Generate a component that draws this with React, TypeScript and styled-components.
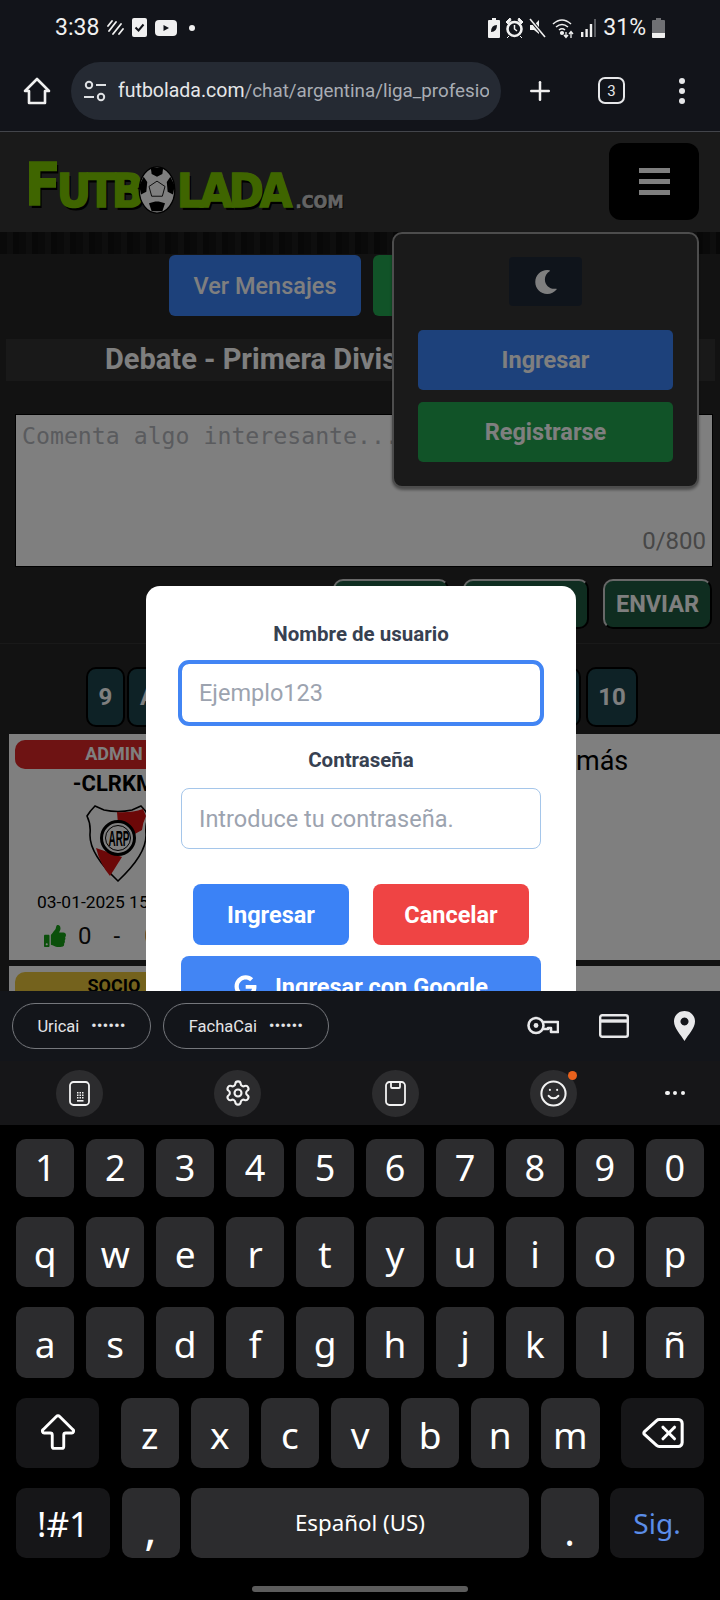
import React from 'react';
import styled, { createGlobalStyle } from 'styled-components';
import { ArrowBigUp, Delete, Plus, Settings, Smile } from 'lucide-react';
import { FaGoogle, FaMoon, FaThumbsUp } from 'react-icons/fa';

const GlobalStyle = createGlobalStyle`
  html, body { margin: 0; padding: 0; background: #000; }
  * { box-sizing: border-box; }
  body { font-family: Roboto, "Liberation Sans", sans-serif; }
`;

const Phone = styled.div`
  width: 720px;
  height: 1600px;
  display: flex;
  flex-direction: column;
  overflow: hidden;
`;

/* system status bar */
const StatusBar = styled.div`
  height: 55px;
  background: #12141a;
  display: flex;
  align-items: center;
  justify-content: space-between;
  padding: 0 55px 0 55px;
  color: #f0f0f0;
`;

const StatusGroup = styled.div<{ $gap: number }>`
  display: flex;
  align-items: center;
  gap: ${(p) => p.$gap}px;
`;

const StatusText = styled.span`
  font-size: 23px;
  line-height: 24px;
`;

/* browser toolbar */
const BrowserBar = styled.div`
  height: 77px;
  background: #12141a;
  border-bottom: 1px solid #43454b;
  display: flex;
  align-items: center;
  padding: 0 0 5px 23px;
`;

const UrlPill = styled.div`
  width: 430px;
  height: 58px;
  margin-left: 20px;
  border-radius: 29px;
  background: #252a33;
  display: flex;
  align-items: center;
  padding: 0 12px 0 13px;
  gap: 12px;
  flex: none;
`;

const UrlText = styled.div`
  flex: 1;
  overflow: hidden;
  white-space: nowrap;
  font-size: 18.8px;
  color: #a9adb4;

  b {
    font-size: 19.5px;
    font-weight: 400;
    color: #e6e7e9;
  }
`;

const PlusSlot = styled.div`
  margin-left: 24px;
  display: flex;
`;

const TabCount = styled.div`
  width: 27px;
  height: 27px;
  margin-left: 43px;
  border: 2.5px solid #e6e7e9;
  border-radius: 7px;
  color: #e6e7e9;
  font-size: 15px;
  display: flex;
  align-items: center;
  justify-content: center;
`;

const MenuDots = styled.div`
  margin-left: 54px;
  display: flex;
  flex-direction: column;
  gap: 4px;

  span {
    width: 6px;
    height: 6px;
    border-radius: 50%;
    background: #e6e7e9;
  }
`;

/* the web page */
const WebPage = styled.div`
  position: relative;
  height: 859px;
  overflow: hidden;
  background: #252525;
  flex: none;
`;

const SiteHeader = styled.div`
  height: 100px;
  background: #343434;
  display: flex;
  align-items: center;
  justify-content: space-between;
  padding: 0 21px 1px 25px;
`;

const Logo = styled.div`
  display: flex;
  align-items: flex-end;
  height: 58px;
  margin-top: 6px;
  font-family: "DejaVu Sans Condensed", "DejaVu Sans", sans-serif;
  font-weight: 700;
  color: #7ecb00;
  text-shadow: 2px 3px 0 #000;
  -webkit-text-stroke: 1.5px #7ecb00;
  line-height: 1;
`;

const LogoCap = styled.span<{ $size: number; $track: number }>`
  font-size: ${(p) => p.$size}px;
  letter-spacing: ${(p) => p.$track}px;
`;

const LogoBall = styled.span`
  display: flex;
  margin: 0 1px 0 -2px;
`;

const LogoCom = styled.span`
  font-size: 18px;
  margin-left: 7px;
  color: #c9c9c9;
  -webkit-text-stroke: 0.5px #c9c9c9;
  text-shadow: 1px 1px 0 #000;
  padding-bottom: 3px;
`;

const BurgerButton = styled.div`
  width: 90px;
  height: 77px;
  background: #000;
  border-radius: 12px;
  display: flex;
  flex-direction: column;
  align-items: center;
  justify-content: center;
  gap: 6px;

  span {
    width: 31px;
    height: 5px;
    background: #fff;
  }
`;

const NoiseStrip = styled.div`
  height: 22px;
  background: repeating-linear-gradient(90deg, #141414 0 7px, #1c1c1c 7px 13px, #101010 13px 19px);
`;

const NavRow = styled.div`
  margin-top: 1px;
  display: flex;
  justify-content: center;
  gap: 12px;
`;

const NavButton = styled.div<{ $bg: string; $w: number }>`
  width: ${(p) => p.$w}px;
  height: 61px;
  border-radius: 6px;
  background: ${(p) => p.$bg};
  color: #fff;
  font-size: 23.5px;
  font-weight: 500;
  display: flex;
  align-items: center;
  justify-content: center;
`;

const DebateStrip = styled.div`
  height: 42px;
  margin: 23px 5px 0 6px;
  padding-left: 99px;
  background: #333;
  color: #fff;
  font-size: 29px;
  font-weight: 700;
  line-height: 40px;
  white-space: nowrap;
`;

const Composer = styled.div`
  margin-top: 33px;
  padding-bottom: 14px;
  border-bottom: 1px solid #333;
`;

const TextBox = styled.div`
  position: relative;
  height: 153px;
  margin: 0 7px 0 15px;
`;

const CommentArea = styled.textarea`
  display: block;
  width: 100%;
  height: 100%;
  padding: 7px 6px;
  border: 1px solid #000;
  border-radius: 0;
  background: #fff;
  resize: none;
  font-family: "DejaVu Sans Mono", monospace;
  font-size: 23.2px;

  &::placeholder {
    color: #b4b7bc;
    opacity: 1;
  }
`;

const Counter = styled.span`
  position: absolute;
  right: 7px;
  bottom: 12px;
  font-size: 24px;
  color: #8e8e8e;
`;

const ActionRow = styled.div`
  margin-top: 12px;
  display: flex;
  justify-content: flex-end;
  gap: 14px;
  padding-right: 8px;
`;

const ActionButton = styled.div<{ $w: number }>`
  width: ${(p) => p.$w}px;
  height: 50px;
  border-radius: 10px;
  border: 2px outset #d0d0d0;
  border-right-color: #000;
  border-bottom-color: #000;
  background: #1e5b40;
  color: #fff;
  font-size: 23.5px;
  font-weight: 700;
  display: flex;
  align-items: center;
  justify-content: center;
`;

const Pagination = styled.div`
  margin-top: 23px;
  padding-left: 86px;
  display: flex;
  gap: 2px;
`;

const PageButton = styled.div<{ $w: number; $push?: number }>`
  width: ${(p) => p.$w}px;
  height: 60px;
  margin-left: ${(p) => p.$push || 0}px;
  border-radius: 10px;
  border: 2px solid #000;
  background: #1c444c;
  color: #fff;
  font-size: 24px;
  font-weight: 700;
  display: flex;
  align-items: center;
  justify-content: center;
`;

const PageLetter = styled(PageButton)`
  justify-content: flex-start;
  padding-left: 11px;
`;

const PostList = styled.div`
  margin: 7px 0 0 9px;
  display: flex;
  flex-direction: column;
  gap: 6px;
`;

const PostCard = styled.div`
  background: #fff;
  display: flex;
  height: 226px;
  padding: 6px;
`;

const AuthorCol = styled.div`
  width: 198px;
  flex: none;
  display: flex;
  flex-direction: column;
  align-items: center;
`;

const RoleBadge = styled.div<{ $bg: string; $fg: string }>`
  width: 100%;
  height: 29px;
  border-radius: 10px;
  background: ${(p) => p.$bg};
  color: ${(p) => p.$fg};
  font-size: 18px;
  font-weight: 700;
  text-align: center;
  line-height: 27px;
  flex: none;
`;

const AuthorName = styled.div`
  margin-top: 1px;
  font-size: 22px;
  font-weight: 700;
  line-height: 28px;
  color: #000;
`;

const CrestSlot = styled.div`
  margin-top: 6px;
  padding-left: 8px;
  display: flex;
`;

const PostDate = styled.div`
  margin-top: 9px;
  align-self: flex-start;
  padding-left: 22px;
  font-size: 17.4px;
  line-height: 22px;
  color: #000;
  white-space: nowrap;
`;

const VoteRow = styled.div`
  align-self: flex-start;
  margin-top: 5px;
  padding-left: 29px;
  display: flex;
  align-items: center;
  font-size: 24px;
  line-height: 36px;
  color: #111;
`;

const VoteCount = styled.span<{ $gap: number }>`
  margin-left: ${(p) => p.$gap}px;
`;

const PostBody = styled.div`
  flex: 1;
  padding-left: 363px;
  padding-top: 5px;
  font-size: 27px;
  line-height: 32px;
  color: #000;
`;

const Backdrop = styled.div`
  position: absolute;
  inset: 0;
  background: rgba(0, 0, 0, 0.5);
`;

const MenuPopup = styled.div`
  position: absolute;
  top: 100px;
  right: 21px;
  width: 307px;
  height: 256px;
  padding: 23px 24px 0;
  border: 2px solid #9a9a9a;
  border-radius: 10px;
  background: #343434;
  box-shadow: 0 2px 3px rgba(0, 0, 0, 0.4);
  display: flex;
  flex-direction: column;
  align-items: center;
`;

const ThemeButton = styled.div`
  width: 73px;
  height: 49px;
  border-radius: 4px;
  background: #1f2937;
  color: #fff;
  display: flex;
  align-items: center;
  justify-content: center;
`;

const MenuButton = styled.div<{ $bg: string; $top: number }>`
  width: 100%;
  height: 60px;
  margin-top: ${(p) => p.$top}px;
  border-radius: 5px;
  background: ${(p) => p.$bg};
  color: #fff;
  font-size: 23.5px;
  font-weight: 700;
  display: flex;
  align-items: center;
  justify-content: center;
`;

const LoginModal = styled.div`
  position: absolute;
  top: 454px;
  left: 146px;
  width: 430px;
  padding: 36px 35px 30px;
  border-radius: 14px;
  background: #fff;
  display: flex;
  flex-direction: column;
  align-items: center;
`;

const FieldLabel = styled.label<{ $top: number }>`
  margin-top: ${(p) => p.$top}px;
  font-size: 20.5px;
  font-weight: 700;
  line-height: 24px;
  color: #374151;
`;

const FieldInput = styled.input<{ $focus?: boolean; $top: number; $h: number }>`
  width: 100%;
  height: ${(p) => p.$h}px;
  margin-top: ${(p) => p.$top}px;
  padding: 0 17px;
  border: 1px solid #a5c6ea;
  border-radius: 8px;
  outline: ${(p) => (p.$focus ? '4px solid #4285f4' : 'none')};
  outline-offset: -1px;
  background: #fff;
  font-family: Roboto, sans-serif;
  font-size: 23.5px;

  &::placeholder {
    color: #9ca3af;
    opacity: 1;
  }
`;

const ModalActions = styled.div`
  margin-top: 35px;
  display: flex;
  gap: 24px;
`;

const ModalButton = styled.div<{ $bg: string }>`
  width: 156px;
  height: 61px;
  border-radius: 8px;
  background: ${(p) => p.$bg};
  color: #fff;
  font-size: 23.5px;
  font-weight: 700;
  display: flex;
  align-items: center;
  justify-content: center;
`;

const GoogleButton = styled.div`
  width: 100%;
  height: 61px;
  margin-top: 11px;
  border-radius: 8px;
  background: #4285f4;
  color: #fff;
  font-size: 23.5px;
  font-weight: 700;
  display: flex;
  align-items: center;
  justify-content: center;
  gap: 18px;
`;

/* keyboard */
const AutofillBar = styled.div`
  height: 70px;
  background: #13151a;
  display: flex;
  align-items: center;
  padding: 0 0 0 12px;
  gap: 12px;
  flex: none;
`;

const CredentialChip = styled.div<{ $w: number }>`
  width: ${(p) => p.$w}px;
  height: 46px;
  border: 1px solid #75777c;
  border-radius: 23px;
  color: #e3e3e6;
  font-size: 16.5px;
  display: flex;
  align-items: center;
  justify-content: center;
  gap: 12px;

  i {
    font-style: normal;
    font-size: 14.5px;
    letter-spacing: 0.5px;
    font-weight: 700;
  }
`;

const AutofillIcons = styled.div`
  margin-left: auto;
  display: grid;
  grid-template-columns: repeat(3, 71px);
  justify-items: center;
  align-items: center;
`;

const KeyboardTools = styled.div`
  height: 64px;
  background: #161618;
  display: flex;
  align-items: center;
  padding-left: 56px;
  gap: 111px;
  flex: none;
`;

const ToolButton = styled.div`
  position: relative;
  width: 47px;
  height: 47px;
  border-radius: 50%;
  background: #2c2c2e;
  color: #f2f2f2;
  display: flex;
  align-items: center;
  justify-content: center;
`;

const NotifyDot = styled.span`
  position: absolute;
  top: 1px;
  right: 0;
  width: 9px;
  height: 9px;
  border-radius: 50%;
  background: #e8611c;
`;

const MoreDots = styled.div`
  width: 20px;
  margin-left: -23px;
  display: flex;
  justify-content: space-between;

  span {
    width: 4.5px;
    height: 4.5px;
    border-radius: 50%;
    background: #f2f2f2;
  }
`;

const KeyArea = styled.div`
  flex: 1;
  background: #000;
  padding: 14px 16px 0;
  display: flex;
  flex-direction: column;
  gap: 20px;
  position: relative;
`;

const KeyRow = styled.div`
  display: flex;
  gap: 11.5px;
`;

const Key = styled.div<{
  $h: number;
  $w?: number;
  $dark?: boolean;
  $size?: number;
  $side?: string;
  $color?: string;
  $drop?: number;
}>`
  height: ${(p) => p.$h}px;
  flex: ${(p) => (p.$w ? `0 0 ${p.$w}px` : '1 1 0')};
  min-width: 0;
  padding-top: ${(p) => p.$drop || 0}px;
  border-radius: 10px;
  background: ${(p) => (p.$dark ? '#161618' : '#2c2c2e')};
  color: ${(p) => p.$color || '#fff'};
  font-family: "Noto Sans", sans-serif;
  font-size: ${(p) => p.$size || 37}px;
  line-height: 1;
  display: flex;
  align-items: center;
  justify-content: center;
  margin: ${(p) => (p.$side === 'right' ? '0 10px 0 0' : p.$side === 'left' ? '0 0 0 10px' : '0')};
`;

const HomePill = styled.div`
  position: absolute;
  left: 252px;
  top: 461px;
  width: 216px;
  height: 6px;
  border-radius: 3px;
  background: #5c5c5c;
`;

const rowOne = ['1', '2', '3', '4', '5', '6', '7', '8', '9', '0'];
const rowTwo = ['q', 'w', 'e', 'r', 't', 'y', 'u', 'i', 'o', 'p'];
const rowThree = ['a', 's', 'd', 'f', 'g', 'h', 'j', 'k', 'l', 'ñ'];
const rowFour = ['z', 'x', 'c', 'v', 'b', 'n', 'm'];

const SoccerBall = () => (
  <svg width="38" height="48" viewBox="0 0 42 54">
    <ellipse cx="21" cy="27" rx="20" ry="26" fill="#fff" stroke="#000" strokeWidth="1.5" />
    <polygon points="21,17 30,23 27,34 15,34 12,23" fill="#fff" stroke="#000" strokeWidth="1" />
    <path d="M14 2 L28 2 L27 9 L21 12 L15 9 Z" fill="#000" />
    <path d="M36 12 L41 22 L39 32 L33 29 L32 18 Z" fill="#000" />
    <path d="M6 12 L1 22 L3 32 L9 29 L10 18 Z" fill="#000" />
    <path d="M12 42 L19 40 L23 40 L30 42 L27 51 L15 51 Z" fill="#000" />
  </svg>
);

const RiverCrest = () => (
  <svg width="64" height="78" viewBox="0 0 64 78">
    <path d="M9 2 L18 6 Q32 9 46 6 L55 2 Q60 7 63 12 Q59 20 60 30 Q61 50 32 77 Q3 50 4 30 Q5 20 1 12 Q4 7 9 2 Z" fill="#fff" stroke="#000" strokeWidth="1.6" />
    <path d="M31 8 Q45 9 57 5 L60 12 Q57 18 56 26 L47 31 L32 20 Z" fill="#d81010" />
    <path d="M10 44 L36 53 L24 72 Q14 60 10 44 Z" fill="#d81010" />
    <circle cx="32" cy="34" r="16.5" fill="#fff" stroke="#000" strokeWidth="3" />
    <circle cx="32" cy="34" r="12.5" fill="none" stroke="#000" strokeWidth="1" />
    <text x="33" y="42" textAnchor="middle" fontFamily="Liberation Sans" fontWeight="700" fontSize="22" textLength="21" lengthAdjust="spacingAndGlyphs" fill="#000">ARP</text>
  </svg>
);

const HomeIcon = () => (
  <svg width="28" height="28" viewBox="0 0 28 28" fill="none" stroke="#f0f0f0" strokeWidth="2.6" strokeLinejoin="round">
    <path d="M14 2 L26 14 H22 V26 H6 V14 H2 Z" />
  </svg>
);

const TuneIcon = () => (
  <svg width="22" height="24" viewBox="0 0 22 24" fill="none" stroke="#dfe1e4" strokeWidth="2">
    <circle cx="5" cy="6" r="3.2" />
    <path d="M12 6 H22 M0 18 H10" />
    <circle cx="17" cy="18" r="3.2" />
  </svg>
);

const StatusIcons = {
  Stripes: () => (
    <svg width="17" height="16" viewBox="0 0 17 16" stroke="#f0f0f0" strokeWidth="1.8" strokeLinecap="round">
      <path d="M5 1 L1 6 M9 2 L2 11 M14 4 L6 14 M16 9 L12 14" />
    </svg>
  ),
  Check: () => (
    <svg width="15" height="19" viewBox="0 0 15 19">
      <rect width="15" height="19" rx="2" fill="#f0f0f0" />
      <path d="M3.5 9.5 L6.5 12.5 L11.5 6.5" fill="none" stroke="#12141a" strokeWidth="2" />
    </svg>
  ),
  Video: () => (
    <svg width="22" height="16" viewBox="0 0 22 16">
      <rect width="22" height="16" rx="4" fill="#f0f0f0" />
      <path d="M8.5 5 L14 8 L8.5 11 Z" fill="#12141a" />
    </svg>
  ),
  Dot: () => (
    <svg width="6" height="6" viewBox="0 0 6 6" style={{ marginLeft: 4 }}>
      <circle cx="3" cy="3" r="3" fill="#f0f0f0" />
    </svg>
  ),
  Saver: () => (
    <svg width="12" height="20" viewBox="0 0 12 20">
      <path d="M4 0 H8 V2 H11 Q12 2 12 3 V19 Q12 20 11 20 H1 Q0 20 0 19 V3 Q0 2 1 2 H4 Z" fill="#f0f0f0" />
      <path d="M3 14 Q3 7 9 7 Q9 14 3 14 Z" fill="#12141a" />
    </svg>
  ),
  Alarm: () => (
    <svg width="17" height="20" viewBox="0 0 17 20">
      <circle cx="8.5" cy="11" r="7" fill="none" stroke="#f0f0f0" strokeWidth="2.6" />
      <path d="M8.5 7 V11 L11 13" stroke="#f0f0f0" strokeWidth="1.5" fill="none" />
      <path d="M0 4 L4 0 L5 2 L2 6 Z M17 4 L13 0 L12 2 L15 6 Z M3 18 L1 20 M14 18 L16 20" fill="#f0f0f0" stroke="#f0f0f0" />
    </svg>
  ),
  Mute: () => (
    <svg width="17" height="20" viewBox="0 0 17 20">
      <path d="M1 7 H5 L10 2 V16 L5 12 H1 Z" fill="#f0f0f0" />
      <path d="M1 1 L16 19" stroke="#12141a" strokeWidth="3.5" />
      <path d="M1 1 L16 19" stroke="#f0f0f0" strokeWidth="1.6" />
    </svg>
  ),
  Wifi: () => (
    <svg width="23" height="22" viewBox="0 0 23 22" fill="none" stroke="#f0f0f0" strokeWidth="1.6">
      <path d="M1 7 Q10 -1 19 7 M4 10 Q10 5 16 10 M7 13 Q10 10.5 13 13" />
      <circle cx="10" cy="16" r="1.3" fill="#f0f0f0" />
      <path d="M14 20 V15 M19 21 V15 M17 17 L19 14.5 L21 17 M12 18 L14 20.5 L16 18" strokeWidth="1.3" />
    </svg>
  ),
  Signal: () => (
    <svg width="16" height="18" viewBox="0 0 16 18" fill="#f0f0f0">
      <rect x="0" y="13" width="2.4" height="5" />
      <rect x="4.4" y="10" width="2.4" height="8" />
      <rect x="8.8" y="5" width="2.4" height="13" />
      <rect x="13.2" y="0" width="1.6" height="18" fill="#6d6f73" />
    </svg>
  ),
  Battery: () => (
    <svg width="13" height="20" viewBox="0 0 13 20">
      <path d="M4 0 H9 V2 H12 Q13 2 13 3 V19 Q13 20 12 20 H1 Q0 20 0 19 V3 Q0 2 1 2 H4 Z" fill="#6f7074" />
      <path d="M0 15 H13 V19 Q13 20 12 20 H1 Q0 20 0 19 Z" fill="#f0f0f0" />
    </svg>
  )
};

const KeyIcon = () => (
  <svg width="32" height="20" viewBox="0 0 32 20" fill="none" stroke="#e8e8ea" strokeWidth="2.6">
    <circle cx="9" cy="9.5" r="7.5" />
    <circle cx="9" cy="9.5" r="2.4" fill="#e8e8ea" strokeWidth="0" />
    <path d="M16 6 H31 V16 H24 V12 H21 V13 H16" strokeLinejoin="round" />
  </svg>
);

const CardIcon = () => (
  <svg width="30" height="24" viewBox="0 0 30 24" fill="none" stroke="#e8e8ea" strokeWidth="2.4">
    <rect x="1.2" y="1.2" width="27.6" height="21.6" rx="2" />
    <path d="M1 7 H29" strokeWidth="3.4" />
  </svg>
);

const PinIcon = () => (
  <svg width="21" height="30" viewBox="0 0 21 30">
    <path
      d="M10.5 0 C16.5 0 21 4.5 21 10.5 C21 17 14 24 10.5 30 C7 24 0 17 0 10.5 C0 4.5 4.5 0 10.5 0 Z M10.5 6.5 A4 4 0 1 0 10.51 6.5 Z"
      fill="#e8e8ea"
      fillRule="evenodd"
    />
  </svg>
);

const PhoneKeysIcon = () => (
  <svg width="21" height="25" viewBox="0 0 21 25" fill="none" stroke="#f2f2f2" strokeWidth="1.8">
    <rect x="1" y="1" width="19" height="23" rx="3.5" />
    <g fill="#f2f2f2" stroke="none">
      <rect x="8" y="11" width="1.5" height="1.5" /><rect x="10.5" y="11" width="1.5" height="1.5" /><rect x="13" y="11" width="1.5" height="1.5" />
      <rect x="8" y="13.5" width="1.5" height="1.5" /><rect x="10.5" y="13.5" width="1.5" height="1.5" /><rect x="13" y="13.5" width="1.5" height="1.5" />
      <rect x="8" y="16" width="1.5" height="1.5" /><rect x="10.5" y="16" width="1.5" height="1.5" /><rect x="13" y="16" width="1.5" height="1.5" />
      <rect x="8" y="19" width="6.5" height="1.6" />
    </g>
  </svg>
);

const ClipboardIcon = () => (
  <svg width="21" height="25" viewBox="0 0 21 25" fill="none" stroke="#f2f2f2" strokeWidth="1.8">
    <rect x="1" y="1" width="19" height="23" rx="3.5" />
    <path d="M6 1 V6 Q6 7 7 7 H14 Q15 7 15 6 V1" />
  </svg>
);

const App = () => {
  return (
    <Phone>
      <GlobalStyle />
      <StatusBar>
        <StatusGroup $gap={8}>
          <StatusText>3:38</StatusText>
          <StatusIcons.Stripes />
          <StatusIcons.Check />
          <StatusIcons.Video />
          <StatusIcons.Dot />
        </StatusGroup>
        <StatusGroup $gap={6}>
          <StatusIcons.Saver />
          <StatusIcons.Alarm />
          <StatusIcons.Mute />
          <StatusIcons.Wifi />
          <StatusIcons.Signal />
          <StatusText>31%</StatusText>
          <StatusIcons.Battery />
        </StatusGroup>
      </StatusBar>

      <BrowserBar>
        <HomeIcon />
        <UrlPill>
          <TuneIcon />
          <UrlText>
            <b>futbolada.com</b>/chat/argentina/liga_profesional
          </UrlText>
        </UrlPill>
        <PlusSlot>
          <Plus size={30} color="#f0f0f0" strokeWidth={2} />
        </PlusSlot>
        <TabCount>3</TabCount>
        <MenuDots>
          <span />
          <span />
          <span />
        </MenuDots>
      </BrowserBar>

      <WebPage>
        <SiteHeader>
          <Logo>
            <LogoCap $size={58} $track={-4}>F</LogoCap>
            <LogoCap $size={47} $track={-4}>UTB</LogoCap>
            <LogoBall>
              <SoccerBall />
            </LogoBall>
            <LogoCap $size={47} $track={-4}>LADA</LogoCap>
            <LogoCom>.COM</LogoCom>
          </Logo>
          <BurgerButton>
            <span />
            <span />
            <span />
          </BurgerButton>
        </SiteHeader>
        <NoiseStrip />
        <NavRow>
          <NavButton $bg="#3b82f6" $w={192}>Ver Mensajes</NavButton>
          <NavButton $bg="#22a650" $w={178} />
        </NavRow>
        <DebateStrip>Debate - Primera División</DebateStrip>
        <Composer>
          <TextBox>
            <CommentArea placeholder="Comenta algo interesante..." />
            <Counter>0/800</Counter>
          </TextBox>
          <ActionRow>
            <ActionButton $w={116} />
            <ActionButton $w={126} />
            <ActionButton $w={109}>ENVIAR</ActionButton>
          </ActionRow>
        </Composer>
        <Pagination>
          <PageButton $w={39}>9</PageButton>
          <PageLetter $w={226}>A</PageLetter>
          <PageButton $w={226} />
          <PageButton $w={52} $push={3}>10</PageButton>
        </Pagination>
        <PostList>
          <PostCard>
            <AuthorCol>
              <RoleBadge $bg="#dc2626" $fg="#fff">ADMIN</RoleBadge>
              <AuthorName>-CLRKM</AuthorName>
              <CrestSlot>
                <RiverCrest />
              </CrestSlot>
              <PostDate>03-01-2025 15</PostDate>
              <VoteRow>
                <FaThumbsUp size={22} color="#16a016" />
                <VoteCount $gap={12}>0</VoteCount>
                <VoteCount $gap={22}>-</VoteCount>
                <VoteCount $gap={24}>0</VoteCount>
              </VoteRow>
            </AuthorCol>
            <PostBody>más</PostBody>
          </PostCard>
          <PostCard>
            <AuthorCol>
              <RoleBadge $bg="#e8c53a" $fg="#000">SOCIO</RoleBadge>
            </AuthorCol>
          </PostCard>
        </PostList>

        <MenuPopup>
          <ThemeButton>
            <FaMoon size={24} />
          </ThemeButton>
          <MenuButton $bg="#3b82f6" $top={24}>Ingresar</MenuButton>
          <MenuButton $bg="#22a650" $top={12}>Registrarse</MenuButton>
        </MenuPopup>

        <Backdrop />

        <LoginModal>
          <FieldLabel $top={0}>Nombre de usuario</FieldLabel>
          <FieldInput $focus $top={17} $h={60} placeholder="Ejemplo123" />
          <FieldLabel $top={25}>Contraseña</FieldLabel>
          <FieldInput $top={16} $h={61} placeholder="Introduce tu contraseña." />
          <ModalActions>
            <ModalButton $bg="#3b82f6">Ingresar</ModalButton>
            <ModalButton $bg="#ef4444">Cancelar</ModalButton>
          </ModalActions>
          <GoogleButton>
            <FaGoogle size={23} />
            Ingresar con Google
          </GoogleButton>
        </LoginModal>
      </WebPage>

      <AutofillBar>
        <CredentialChip $w={139}>Uricai <i>••••••</i></CredentialChip>
        <CredentialChip $w={166}>FachaCai <i>••••••</i></CredentialChip>
        <AutofillIcons>
          <KeyIcon />
          <CardIcon />
          <PinIcon />
        </AutofillIcons>
      </AutofillBar>

      <KeyboardTools>
        <ToolButton><PhoneKeysIcon /></ToolButton>
        <ToolButton><Settings size={28} strokeWidth={1.8} /></ToolButton>
        <ToolButton><ClipboardIcon /></ToolButton>
        <ToolButton>
          <Smile size={29} strokeWidth={1.7} />
          <NotifyDot />
        </ToolButton>
        <MoreDots>
          <span />
          <span />
          <span />
        </MoreDots>
      </KeyboardTools>

      <KeyArea>
        <KeyRow>
          {rowOne.map((k) => (
            <Key key={k} $h={58} $size={36}>{k}</Key>
          ))}
        </KeyRow>
        <KeyRow>
          {rowTwo.map((k) => (
            <Key key={k} $h={70} $drop={2}>{k}</Key>
          ))}
        </KeyRow>
        <KeyRow>
          {rowThree.map((k) => (
            <Key key={k} $h={71} $drop={2}>{k}</Key>
          ))}
        </KeyRow>
        <KeyRow>
          <Key $h={70} $w={83} $dark $side="right">
            <ArrowBigUp size={46} strokeWidth={1.5} />
          </Key>
          {rowFour.map((k) => (
            <Key key={k} $h={70} $drop={2}>{k}</Key>
          ))}
          <Key $h={70} $w={83} $dark $side="left">
            <Delete size={46} strokeWidth={1.6} />
          </Key>
        </KeyRow>
        <KeyRow>
          <Key $h={70} $w={94} $dark $size={35}>!#1</Key>
          <Key $h={70} $size={46} $drop={8}>,</Key>
          <Key $h={70} $w={338} $size={22.3}>Español (US)</Key>
          <Key $h={70} $size={40} $drop={16}>.</Key>
          <Key $h={70} $w={94} $dark $size={28} $color="#5b8de8">Sig.</Key>
        </KeyRow>
        <HomePill />
      </KeyArea>
    </Phone>
  );
};

export default App;
